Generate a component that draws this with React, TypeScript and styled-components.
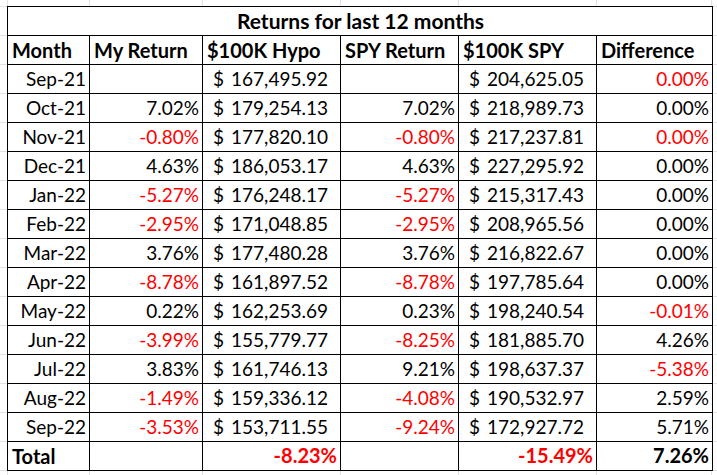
import React from 'react'
import styled, { createGlobalStyle } from 'styled-components'

//** data
type Row = {
  month: string
  myReturn: string
  hypo: string
  spyReturn: string
  spy: string
  diff: string
  diffRed?: boolean
}

const rows: Row[] = [
  { month: 'Sep-21', myReturn: '', hypo: '167,495.92', spyReturn: '', spy: '204,625.05', diff: '0.00%', diffRed: true },
  { month: 'Oct-21', myReturn: '7.02%', hypo: '179,254.13', spyReturn: '7.02%', spy: '218,989.73', diff: '0.00%' },
  { month: 'Nov-21', myReturn: '-0.80%', hypo: '177,820.10', spyReturn: '-0.80%', spy: '217,237.81', diff: '0.00%', diffRed: true },
  { month: 'Dec-21', myReturn: '4.63%', hypo: '186,053.17', spyReturn: '4.63%', spy: '227,295.92', diff: '0.00%' },
  { month: 'Jan-22', myReturn: '-5.27%', hypo: '176,248.17', spyReturn: '-5.27%', spy: '215,317.43', diff: '0.00%' },
  { month: 'Feb-22', myReturn: '-2.95%', hypo: '171,048.85', spyReturn: '-2.95%', spy: '208,965.56', diff: '0.00%' },
  { month: 'Mar-22', myReturn: '3.76%', hypo: '177,480.28', spyReturn: '3.76%', spy: '216,822.67', diff: '0.00%' },
  { month: 'Apr-22', myReturn: '-8.78%', hypo: '161,897.52', spyReturn: '-8.78%', spy: '197,785.64', diff: '0.00%' },
  { month: 'May-22', myReturn: '0.22%', hypo: '162,253.69', spyReturn: '0.23%', spy: '198,240.54', diff: '-0.01%' },
  { month: 'Jun-22', myReturn: '-3.99%', hypo: '155,779.77', spyReturn: '-8.25%', spy: '181,885.70', diff: '4.26%' },
  { month: 'Jul-22', myReturn: '3.83%', hypo: '161,746.13', spyReturn: '9.21%', spy: '198,637.37', diff: '-5.38%' },
  { month: 'Aug-22', myReturn: '-1.49%', hypo: '159,336.12', spyReturn: '-4.08%', spy: '190,532.97', diff: '2.59%' },
  { month: 'Sep-22', myReturn: '-3.53%', hypo: '153,711.55', spyReturn: '-9.24%', spy: '172,927.72', diff: '5.71%' },
]

const headers = ['Month', 'My Return', '$100K Hypo', 'SPY Return', '$100K SPY', 'Difference']
const colWidths = [82, 113, 138, 118, 138, 116]

const isRed = (v: string) => v.startsWith('-')

const Money = ({ value }: { value: string }) => (
  <Cell>
    <MoneyWrap>
      <span>$</span>
      <span>{value}</span>
    </MoneyWrap>
  </Cell>
)

export default function App() {
  return (
    <>
      <GlobalStyle />
      <Sheet>
        <Table>
          <colgroup>
            {colWidths.map((w, i) => <col key={i} style={{ width: w }} />)}
          </colgroup>
          <tbody>
            <tr>
              <TitleCell colSpan={6}>Returns for last 12 months</TitleCell>
            </tr>
            <tr>
              {headers.map(h => <HeadCell key={h}>{h}</HeadCell>)}
            </tr>
            {rows.map(r => (
              <tr key={r.month}>
                <Cell $right>{r.month}</Cell>
                <Cell $right $red={isRed(r.myReturn)}>{r.myReturn}</Cell>
                <Money value={r.hypo} />
                <Cell $right $red={isRed(r.spyReturn)}>{r.spyReturn}</Cell>
                <Money value={r.spy} />
                <Cell $right $red={r.diffRed || isRed(r.diff)}>{r.diff}</Cell>
              </tr>
            ))}
            <tr>
              <HeadCell>Total</HeadCell>
              <Cell />
              <Cell $right $red $bold>-8.23%</Cell>
              <Cell />
              <Cell $right $red $bold>-15.49%</Cell>
              <Cell $right $bold>7.26%</Cell>
            </tr>
          </tbody>
        </Table>
      </Sheet>
    </>
  )
}

const grid = '#e1e1e1'
const vline = (x: number) => `linear-gradient(${grid}, ${grid}) ${x}px 0 / 1px 100% no-repeat`

const GlobalStyle = createGlobalStyle`
  body {
    margin: 0;
    background: #fff;
  }
`
const Sheet = styled.div`
  width: 717px;
  height: 475px;
  box-sizing: border-box;
  padding: 6px 0 0 7px;
  background:
    ${[7, 89, 202, 340, 458, 596, 711].map(vline).join(', ')},
    repeating-linear-gradient(to bottom, ${grid} 0 1px, transparent 1px 29px) 0 6px / 100% 100% no-repeat;
  overflow: hidden;
`
const Table = styled.table`
  border-collapse: collapse;
  table-layout: fixed;
  width: 705px;
  background: #fff;
  font-family: Lato, "Noto Sans", sans-serif;
  color: #000;

  & td, & th {
    border: 1px solid #000;
    padding: 0 3px 5px 4px;
    height: 23px;
    vertical-align: bottom;
    line-height: 1;
    white-space: nowrap;
    overflow: hidden;
  }
`
const TitleCell = styled.th`
  font-size: 21px;
  font-weight: 700;
  text-align: center;
  && {
    padding-bottom: 4px;
    height: 24px;
  }
`
const HeadCell = styled.th`
  font-size: 20px;
  font-weight: 700;
  text-align: left;
  && {
    padding-bottom: 4px;
    height: 24px;
  }
`
const Cell = styled.td<{ $right?: boolean; $red?: boolean; $bold?: boolean }>`
  font-size: ${p => (p.$bold ? '20px' : '19px')};
  font-weight: ${p => (p.$bold ? 700 : 400)};
  text-align: ${p => (p.$right ? 'right' : 'left')};
  color: ${p => (p.$red ? '#ff0000' : '#000')};
`
const MoneyWrap = styled.div`
  display: flex;
  justify-content: space-between;
  padding: 0 9px 0 6px;
`
